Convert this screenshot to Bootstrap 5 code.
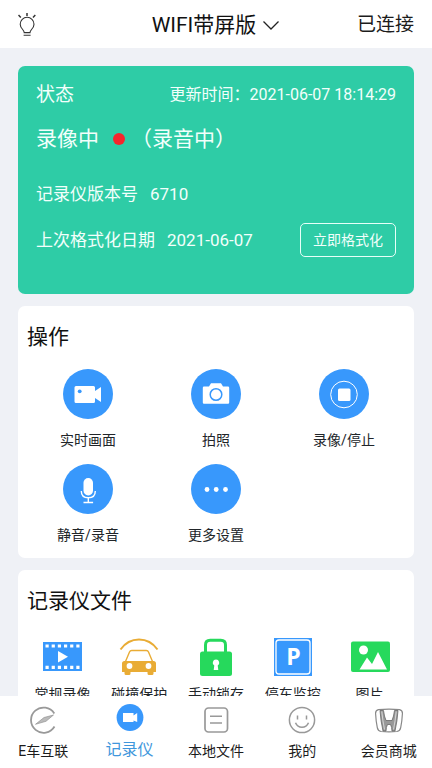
<!DOCTYPE html>
<html lang="zh-CN">
<head>
<meta charset="utf-8">
<meta name="viewport" content="width=device-width, initial-scale=1">
<title>记录仪</title>
<link href="https://cdn.jsdelivr.net/npm/bootstrap@5.3.0/dist/css/bootstrap.min.css" rel="stylesheet">
<style>
  body { font-family: Roboto, "Noto Sans CJK SC", sans-serif; font-size: 14px; line-height: 22px; color: #1c1c1c; background: #eff1f6; }
  button, a { color: inherit; font: inherit; }
  .app-header { min-height: 48px; padding: 2px 18px 0; }
  .header-side { flex: 1 1 0; font-size: 19px; }
  .app-title { font-size: 21px; line-height: 28px; color: #111; gap: 6px; }
  .app-main { padding: 18px; gap: 12px; min-height: 0; scrollbar-width: none; }
  .app-main::-webkit-scrollbar { display: none; }
  .panel { border-radius: 7px; flex-shrink: 0; }
  .status-panel { background: #2ecca6; color: #f2fffb; padding: 15px 18px 37px; font-size: 17px; line-height: 24px; }
  .status-title { font-size: 19px; line-height: 28px; }
  .status-time { font-size: 16px; }
  .status-rec { font-size: 21px; line-height: 36px; margin-top: 12px; }
  .rec-dot { width: 12px; height: 12px; margin: 0 6px 0 14px; background: #f5252c; }
  .status-version { margin-top: 25px; gap: 12px; }
  .status-format { margin-top: 17px; gap: 12px; }
  .format-btn { width: 96px; height: 34px; border: 1px solid #e6fff8; border-radius: 5px; font-size: 14px; }
  .tool-panel { padding: 15px 6px 12px; }
  .panel-title { font-size: 21px; line-height: 32px; margin: 0 3px; color: #111; }
  .ops-grid { margin-top: 16px; row-gap: 13px; }
  .tool-btn, .file-btn { font-size: 14px; line-height: 22px; }
  .tool-btn { gap: 10px; }
  .round-icon { width: 50px; height: 50px; background: #3898fc; }
  .file-grid { margin-top: 20px; }
  .file-btn { gap: 6px; }
  .app-nav { min-height: 72px; padding-top: 10px; z-index: 1; }
  .nav-item-link { gap: 6px; height: 62px; }
  .nav-item-link.current { color: #3f97dc; font-size: 16px; gap: 8px; margin-top: -3px; }
  svg { display: block; flex-shrink: 0; }
</style>
<script src="https://cdn.jsdelivr.net/npm/bootstrap@5.3.0/dist/js/bootstrap.bundle.min.js"></script>
</head>
<body>
<div class="d-flex flex-column vh-100">
  <header class="app-header bg-white d-flex align-items-center">
    <div class="header-side">
      <button type="button" class="btn p-0 border-0" aria-label="提示">
        <svg width="18" height="26" viewBox="0 0 18 26" fill="none" stroke="#333" stroke-width="1.1">
          <path d="M9 1v3M.5 3l2.3 2.4M17.3 3L15 5.400" stroke-width="1.5"/>
          <path d="M6.200 20.600c0-3-4-4-4-8.400a6.900 6.900 0 0 1 13.800 0c0 4.400-4 5.400-4 8.400zM5.600 23.300h7"/>
        </svg>
      </button>
    </div>
    <button type="button" class="app-title btn p-0 border-0 rounded-0 d-flex align-items-center">WIFI带屏版
      <svg width="18" height="12" viewBox="0 0 18 12" fill="none" stroke="#222" stroke-width="1.3"><path d="M1.500 2.500l7.500 7.500 7.500-7.500"/></svg>
    </button>
    <div class="header-side text-end">已连接</div>
  </header>

  <main class="app-main flex-grow-1 overflow-auto d-flex flex-column">
    <section class="panel status-panel">
      <div class="d-flex justify-content-between align-items-center">
        <span class="status-title">状态</span>
        <span class="status-time">更新时间：2021-06-07 18:14:29</span>
      </div>
      <div class="status-rec d-flex align-items-center">
        <span>录像中</span><span class="rec-dot rounded-circle"></span><span>（录音中）</span>
      </div>
      <div class="status-version d-flex"><span>记录仪版本号</span><span>6710</span></div>
      <div class="status-format d-flex align-items-center">
        <span>上次格式化日期</span><span>2021-06-07</span>
        <button type="button" class="format-btn bg-transparent p-0 ms-auto">立即格式化</button>
      </div>
    </section>

    <section class="panel tool-panel bg-white">
      <h2 class="panel-title fw-normal">操作</h2>
      <div class="ops-grid row gx-0 row-cols-3">
        <button type="button" class="tool-btn col btn p-0 border-0 d-flex flex-column align-items-center">
          <span class="round-icon rounded-circle d-flex">
            <svg width="50" height="50" viewBox="0 0 50 50" fill="#fff"><path d="M13 17h17.500q1.500 0 1.500 1.500v3.500l6-4v15l-6-4v3.500q0 1.500-1.500 1.500H13q-1.500 0-1.500-1.500v-14q0-1.500 1.500-1.500z"/><circle cx="16.700" cy="22.300" r="1.900" fill="#3898fc"/></svg>
          </span>实时画面</button>
        <button type="button" class="tool-btn col btn p-0 border-0 d-flex flex-column align-items-center">
          <span class="round-icon rounded-circle d-flex">
            <svg width="50" height="50" viewBox="0 0 50 50"><path d="M13 17.500h5l2-3.200h10l2 3.200h5q1.200 0 1.200 1.200v14.800q0 1.200-1.200 1.200H13q-1.200 0-1.200-1.200V18.700q0-1.200 1.200-1.200z" fill="#fff"/><circle cx="25" cy="25.500" r="5.800" fill="none" stroke="#3898fc" stroke-width="1.500"/></svg>
          </span>拍照</button>
        <button type="button" class="tool-btn col btn p-0 border-0 d-flex flex-column align-items-center">
          <span class="round-icon rounded-circle d-flex">
            <svg width="50" height="50" viewBox="0 0 50 50"><circle cx="25" cy="25.500" r="13.300" fill="none" stroke="#fff"/><rect x="19" y="19.500" width="12.500" height="12.500" rx="1.500" fill="#fff"/></svg>
          </span>录像/停止</button>
        <button type="button" class="tool-btn col btn p-0 border-0 d-flex flex-column align-items-center">
          <span class="round-icon rounded-circle d-flex">
            <svg width="50" height="50" viewBox="0 0 50 50" fill="none" stroke="#fff" stroke-width="1.400"><rect x="20.500" y="14" width="9.500" height="17.500" rx="4.700" fill="#fff" stroke="none"/><path d="M18.300 27c0 4.500 3 6.800 7 6.800s7-2.300 7-6.800M25.300 34v4.500M20.500 38.500h9.600"/></svg>
          </span>静音/录音</button>
        <button type="button" class="tool-btn col btn p-0 border-0 d-flex flex-column align-items-center">
          <span class="round-icon rounded-circle d-flex">
            <svg width="50" height="50" viewBox="0 0 50 50" fill="#fff"><circle cx="16" cy="25.500" r="2.400"/><circle cx="25.200" cy="25.500" r="2.400"/><circle cx="34.500" cy="25.500" r="2.400"/></svg>
          </span>更多设置</button>
      </div>
    </section>

    <section class="panel tool-panel bg-white">
      <h2 class="panel-title fw-normal">记录仪文件</h2>
      <div class="file-grid row gx-0 row-cols-5">
        <button type="button" class="file-btn col btn p-0 border-0 d-flex flex-column align-items-center">
          <svg width="40" height="40" viewBox="0 0 40 40"><path d="M1 5h39v29H1z" fill="#3898fc"/><path d="M3.500 9h34M3.500 30.300h34" stroke="#fff" stroke-width="3.200" stroke-dasharray="3.200 2.960"/><path d="M16 14v11.500l10-5.700z" fill="#fff"/></svg>
          常规录像</button>
        <button type="button" class="file-btn col btn p-0 border-0 d-flex flex-column align-items-center">
          <svg width="40" height="40" viewBox="0 0 40 40"><path d="M1.500 12.500C11-.8 29-.8 38.500 12.500" fill="none" stroke="#e9ac35" stroke-width="2"/><path d="M6.500 24.500l4-9.500q.6-1.500 2.200-1.500h14.600q1.600 0 2.200 1.500l4 9.500" fill="none" stroke="#e9ac35" stroke-width="1.400"/><path d="M5.500 24h29q2.500 0 2.500 2.500V35h-2.500v1.500q0 1.500-1.500 1.500h-3q-1.500 0-1.500-1.500V35h-17v1.500q0 1.500-1.500 1.500H7q-1.500 0-1.500-1.500V35H3v-8.500Q3 24 5.500 24z" fill="#e9ac35"/><circle cx="10.500" cy="29" r="2.900" fill="#fff"/><circle cx="29.500" cy="29" r="2.900" fill="#fff"/></svg>
          碰撞保护</button>
        <button type="button" class="file-btn col btn p-0 border-0 d-flex flex-column align-items-center">
          <svg width="40" height="40" viewBox="0 0 40 40"><path d="M9.500 16V8q0-4.700 4.700-4.700h10.600q4.700 0 4.700 4.700v8" fill="none" stroke="#26d95c" stroke-width="3"/><rect x="4" y="14.500" width="32" height="24.500" rx="2.500" fill="#26d95c"/><path d="M20 22.500a3.300 3.300 0 0 0-1.700 6.100L17.700 33h4.600l-.6-4.400A3.300 3.300 0 0 0 20 22.500z" fill="#fff"/></svg>
          手动锁存</button>
        <button type="button" class="file-btn col btn p-0 border-0 d-flex flex-column align-items-center">
          <svg width="40" height="40" viewBox="0 0 40 40"><path d="M1 1h38v38H1z" fill="#3898fc"/><rect x="3" y="3" width="34" height="34" rx="3" fill="none" stroke="#fff" stroke-width="1.300"/><text x="20.500" y="28" text-anchor="middle" font-family="Open Sans, sans-serif" font-weight="700" font-size="23" fill="#fff">P</text></svg>
          停车监控</button>
        <button type="button" class="file-btn col btn p-0 border-0 d-flex flex-column align-items-center">
          <svg width="40" height="40" viewBox="0 0 40 40"><rect x="1" y="4.500" width="39" height="30.500" rx="2" fill="#26d95c"/><circle cx="13.500" cy="13" r="4.500" fill="#fff"/><path d="M9.500 32.500l7.500-12 5 6.500 6-12 9 17.500z" fill="#fff"/></svg>
          图片</button>
      </div>
    </section>
  </main>

  <nav class="app-nav bg-white row gx-0 row-cols-5 flex-shrink-0">
    <a href="#" class="nav-item-link col d-flex flex-column align-items-center text-decoration-none">
      <svg width="28" height="28" viewBox="0 0 28 28"><path d="M25.300 7.500A12.600 12.600 0 1 0 25.500 20.500" fill="none" stroke="#999" stroke-width="1.800"/><path d="M6.500 18.300L15 11.500 24.500 9 17 15.300z" fill="#bbb" stroke="#888" stroke-width=".6"/></svg>
      E车互联</a>
    <a href="#" class="nav-item-link current col d-flex flex-column align-items-center text-decoration-none" aria-current="page">
      <svg width="28" height="28" viewBox="0 0 28 28"><circle cx="14" cy="14.500" r="13.400" fill="#3898fc"/><path d="M7 10h10.500v2.500l3.700-2.500v9l-3.700-1.500V19H7z" fill="#fff"/></svg>
      记录仪</a>
    <a href="#" class="nav-item-link col d-flex flex-column align-items-center text-decoration-none">
      <svg width="28" height="28" viewBox="0 0 28 28" fill="none" stroke="#999" stroke-width="1.700"><rect x="3" y="2" width="22.500" height="24" rx="3.500"/><path d="M8 10.300h12M8 17h12" stroke-width="1.500"/></svg>
      本地文件</a>
    <a href="#" class="nav-item-link col d-flex flex-column align-items-center text-decoration-none">
      <svg width="28" height="28" viewBox="0 0 28 28" fill="none" stroke="#999" stroke-width="1.500"><circle cx="14" cy="14" r="12.600"/><path d="M9.500 9.500v4M18.500 9.500v4M7.500 16.800c2.500 6 10.500 6 13 0"/></svg>
      我的</a>
    <a href="#" class="nav-item-link col d-flex flex-column align-items-center text-decoration-none">
      <svg width="28" height="28" viewBox="0 0 28 28" fill="none"><path d="M3.500 3.700Q14 2.500 24.500 3.700q3.200.6 2.900 4-.4 7.800-1.700 14-.6 3.300-3.700 3.800-8 .9-16 0-3.100-.5-3.700-3.800Q1 15.500.6 7.700q-.3-3.400 2.900-4z" stroke="#888" stroke-width="1.200"/><path d="M5 4.500h3.500q.7 6 2.500 10h6q1.800-4 2.500-10H23q-.7 10.500-3 20.500h-3q0-4-1.500-6.500h-3Q11 21 11 25H8Q5.700 15 5 4.500z" fill="#999" stroke="#666" stroke-width=".8"/><path d="M6.800 5.500q.9 9.500 2.700 18M21.200 5.500q-.9 9.500-2.700 18" stroke="#ddd" stroke-width=".9"/></svg>
      会员商城</a>
  </nav>
</div>
</body>
</html>
